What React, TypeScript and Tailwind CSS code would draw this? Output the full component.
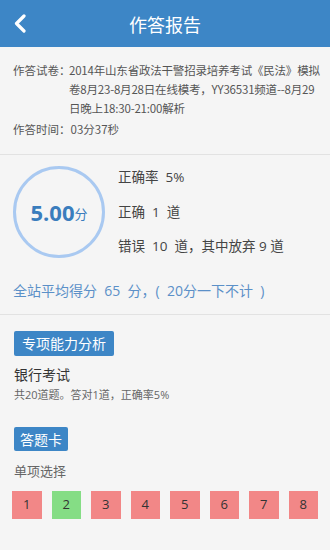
import React from "react";

const font = { fontFamily: '"Noto Sans CJK SC", "Open Sans", sans-serif' };

export default function App() {
  const cells = [
    { n: 1, ok: false },
    { n: 2, ok: true },
    { n: 3, ok: false },
    { n: 4, ok: false },
    { n: 5, ok: false },
    { n: 6, ok: false },
    { n: 7, ok: false },
    { n: 8, ok: false },
  ];
  return (
    <div
      className="w-[330px] h-[550px] bg-[#f5f5f5] overflow-hidden flex flex-col"
      style={{ fontFamily: '"Open Sans", "Noto Sans CJK SC", sans-serif' }}
    >
      <div className="h-[47px] bg-[#3d86c6] flex items-center relative shrink-0">
        <svg
          className="absolute left-[13px] top-[14px]"
          width="14"
          height="19"
          viewBox="0 0 14 19"
        >
          <path
            d="M11 2 L3.5 9.5 L11 17"
            fill="none"
            stroke="white"
            strokeWidth="3.2"
            strokeLinecap="round"
            strokeLinejoin="round"
          />
        </svg>
        <div
          className="flex-1 text-center text-white text-[18px] leading-none"
          style={font}
        >
          作答报告
        </div>
      </div>

      <div
        className="px-[13px] pt-[14px] pb-[15px] border-b border-[#e2e2e2] text-[11.5px] text-[#555]"
        style={font}
      >
        <div className="flex leading-[19px]">
          <span className="w-[56px] shrink-0 whitespace-nowrap">作答试卷：</span>
          <div className="flex-1 flex flex-col whitespace-nowrap tracking-[-0.2px]">
            <span>2014年山东省政法干警招录培养考试《民法》模拟</span>
            <span>卷8月23-8月28日在线模考，YY36531频道--8月29</span>
            <span>日晚上18:30-21:00解析</span>
          </div>
        </div>
        <div className="mt-[2px] leading-[19px]">作答时间：03分37秒</div>
      </div>

      <div className="px-[13px] pt-[11px] pb-[13px] border-b border-[#e2e2e2]">
        <div className="flex items-start">
          <div className="w-[92px] h-[92px] rounded-full border-[3px] border-[#a9c9f1] flex items-center justify-center shrink-0">
            <span className="text-[22px] font-bold text-[#3a7dbd] leading-none">
              5.00
            </span>
            <span className="text-[13px] text-[#3a7dbd] leading-none mt-[4px]">
              分
            </span>
          </div>
          <div className="ml-[13px] text-[13.5px] text-[#444] flex flex-col">
            <div className="h-[20px] leading-[20px] mt-[1px]">正确率&nbsp; 5%</div>
            <div className="h-[20px] leading-[20px] mt-[15px]">正确&nbsp; 1&nbsp; 道</div>
            <div className="h-[20px] leading-[20px] mt-[14px]">
              错误&nbsp; 10&nbsp; 道，其中放弃 9 道
            </div>
          </div>
        </div>
        <div className="mt-[23px] text-[14px] text-[#5b90c8] leading-[20px]">
          全站平均得分&nbsp; 65&nbsp; 分，(&nbsp; 20分一下不计&nbsp; )
        </div>
      </div>

      <div className="px-[14px] pt-[16px]">
        <div className="inline-flex h-[25px] px-[8px] items-center bg-[#3d86c6] rounded-[2px] text-white text-[14px]">
          专项能力分析
        </div>
        <div className="mt-[9px] text-[14px] text-[#333] leading-[20px]">银行考试</div>
        <div className="mt-[1px] text-[11px] text-[#666] leading-[18px]">
          共20道题。答对1道，正确率5%
        </div>
        <div className="mt-[23px] inline-flex h-[24px] px-[6px] items-center bg-[#3d86c6] rounded-[2px] text-white text-[14px]">
          答题卡
        </div>
        <div className="mt-[10px] text-[13px] text-[#666] leading-[20px]">单项选择</div>
      </div>

      <div className="mt-[10px] px-[12px] grid grid-cols-8 gap-x-[10px]">
        {cells.map((c) => (
          <div
            key={c.n}
            className={`h-[28px] flex items-center justify-center text-[13px] text-[#333] ${
              c.ok ? "bg-[#85dd85]" : "bg-[#f28787]"
            }`}
          >
            {c.n}
          </div>
        ))}
      </div>
    </div>
  );
}
